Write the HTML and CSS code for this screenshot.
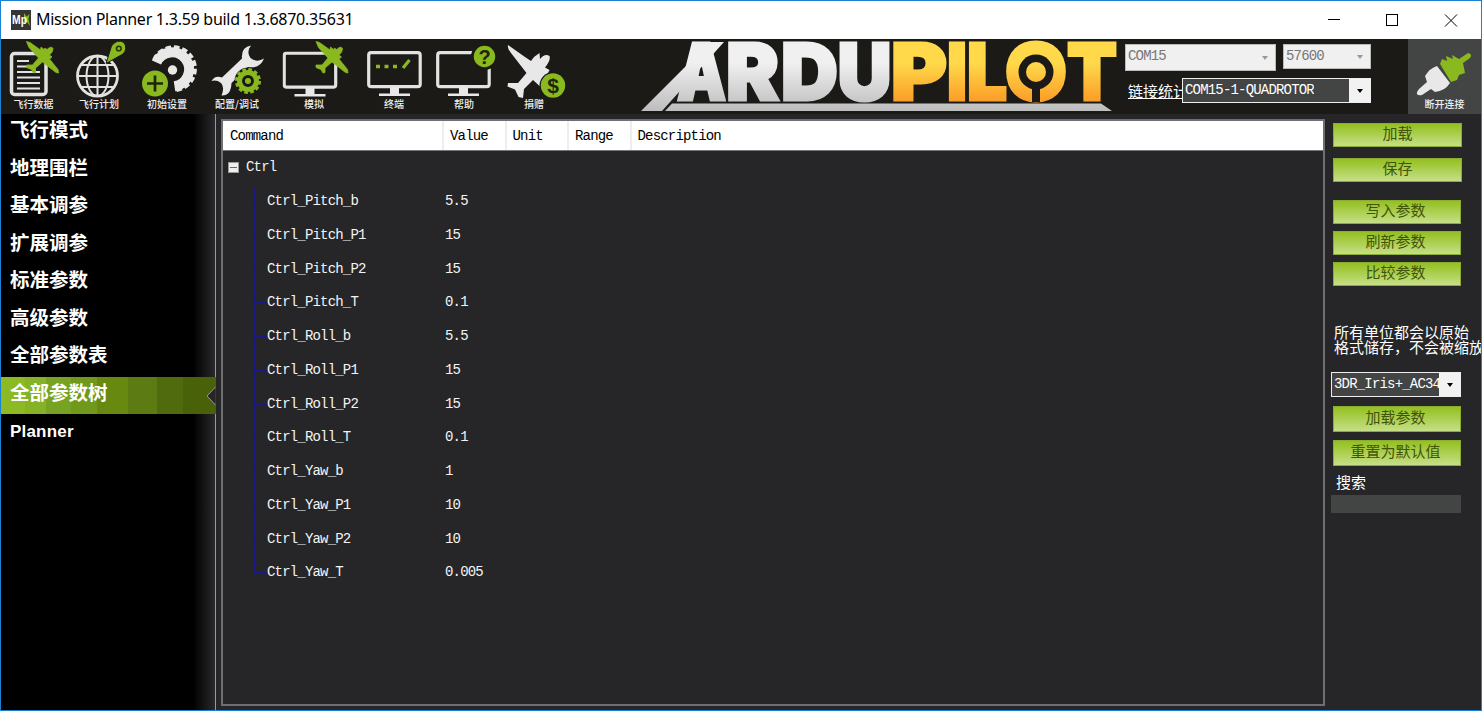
FILE: index.html
```html
<!DOCTYPE html>
<html lang="zh-CN">
<head>
<meta charset="utf-8">
<title>Mission Planner 1.3.59 build 1.3.6870.35631</title>
<link rel="stylesheet" href="styles.css">
</head>
<body>
<div class="window">
  <header class="titlebar">
    <svg class="app-icon" width="20" height="20" viewBox="0 0 20 20">
      <rect width="20" height="20" fill="#343434"/>
      <path d="M13 3 L15.500 6.500 L18.500 4 L17.500 9 L19 16 L16 12 L13 12 Z" fill="#83b520"/>
      <text class="app-mark" x="1" y="14" textLength="15" lengthAdjust="spacingAndGlyphs">Mp</text>
    </svg>
    <span class="title">Mission Planner 1.3.59 build 1.3.6870.35631</span>
    <svg class="controls" width="148" height="38" viewBox="1333 1 148 38" fill="none" stroke="#000" shape-rendering="crispEdges">
      <path d="M1328 19.500h12"/><rect x="1386.500" y="14.500" width="11" height="11"/>
      <path d="M1445 14.500l12 12M1457 14.500l-12 12" shape-rendering="auto"/>
    </svg>
  </header>

  <nav class="toolbar">
    <div class="tool w65"><svg width="65" height="58" viewBox="1 39 65 58">
      <rect x="11.500" y="53.500" width="34.500" height="41" rx="3" fill="none" stroke="#e2e2e2" stroke-width="3.500"/>
      <path d="M17 61h12M17 66.500h11M17 72h23M17 77.500h23M17 83h23M17 88.500h23" stroke="#e2e2e2" stroke-width="2"/>
      <use href="#plane" x="26" y="41.500"/>
    </svg><span>飞行数据</span></div>

    <div class="tool w66"><svg width="66" height="58" viewBox="66 39 66 58">
      <g fill="none" stroke="#e2e2e2" stroke-width="2">
        <circle cx="97.500" cy="76" r="20" stroke-width="2.800"/><ellipse cx="97.500" cy="76" rx="11" ry="20"/>
        <path d="M97.500 56v40M77.500 76h40M81 65h33M81 87h33"/>
      </g>
      <path d="M106 63.500L111.500 46Q117 38.500 124 42.500Q128 49 123 54Z" fill="#8ab81f" stroke="#1b1a17" stroke-width="1"/>
      <circle cx="118.800" cy="48.500" r="2.300" fill="none" stroke="#2b350c" stroke-width="1.600"/>
    </svg><span>飞行计划</span></div>

    <div class="tool w70"><svg width="70" height="58" viewBox="132 39 70 58">
      <g fill="none" stroke="#e8e8e8">
        <path d="M156.500 62.500A17 17 0 1 1 174.500 86.200" stroke-width="10"/>
        <path d="M154 60A21.400 21.400 0 1 1 176 90" stroke-width="4" stroke-dasharray="5.500 2.800"/>
      </g>
      <circle cx="172.500" cy="70" r="4.700" fill="#e8e8e8"/>
      <circle cx="155" cy="83.500" r="13" fill="#8ab81f"/>
      <path d="M155 75.500v16M147 83.500h16" stroke="#1d2608" stroke-width="2.700"/>
    </svg><span>初始设置</span></div>

    <div class="tool w70"><svg width="70" height="58" viewBox="202 39 70 58">
      <path d="M251 45.500Q241 47 242 58.500L222 77.500Q215 75 211.500 81Q216.500 79.500 221 83Q225 87 221.500 95.500Q231 96 231.500 83L248 67Q260 69 264 58.500Q257 63 250.500 58Q246 52 251 45.500Z" fill="#e8e8e8"/>
      <circle cx="248" cy="81" r="13.500" fill="#1b1a17"/>
      <circle cx="248" cy="81" r="8.500" fill="none" stroke="#8ab81f" stroke-width="5"/>
      <circle cx="248" cy="81" r="11.500" fill="none" stroke="#8ab81f" stroke-width="3" stroke-dasharray="3.600 2.420"/>
      <circle cx="248" cy="81" r="3" fill="#8ab81f"/>
    </svg><span>配置/调试</span></div>

    <div class="tool w84"><svg width="84" height="58" viewBox="272 39 84 58">
      <use href="#monitor" x="282.500" y="51.500"/>
      <use href="#plane" x="315.500" y="41.500"/>
    </svg><span>模拟</span></div>

    <div class="tool w76"><svg width="76" height="58" viewBox="356 39 76 58">
      <use href="#monitor" x="367" y="51"/>
      <path d="M376 66.500h4M384.500 66.500h4M393 66.500h4" stroke="#8ab81f" stroke-width="3.500"/>
      <path d="M403 68l6.500-8" stroke="#8ab81f" stroke-width="3.200"/>
    </svg><span>终端</span></div>

    <div class="tool w64"><svg width="64" height="58" viewBox="432 39 64 58">
      <use href="#monitor" x="436" y="51"/>
      <circle cx="484.500" cy="56.500" r="13.500" fill="#1b1a17"/>
      <circle cx="484.500" cy="56.500" r="10.700" fill="#8ab81f"/>
      <text class="badge-mark" x="484.500" y="63.500">?</text>
    </svg><span>帮助</span></div>

    <div class="tool w76"><svg width="76" height="58" viewBox="496 39 76 58">
      <path d="M508 45Q507 48 511 53L526.500 73L518 83L508 83L507.500 86.500L515 89.500L518.500 97L523 98L524 89L533 80L545 91L553 76L548 73L549.500 70L545 67.500Q551 60 549.500 56Q545 53 540 59L539.500 53L534 57L531 61L525 57Z" fill="#e8e8e8"/>
      <circle cx="553" cy="85.500" r="13.500" fill="#1b1a17"/>
      <circle cx="553" cy="85.500" r="12.200" fill="#8ab81f"/>
      <text class="badge-mark dollar" x="553" y="93">$</text>
    </svg><span>捐赠</span></div>

    <svg class="brand" width="480" height="74" viewBox="639 39 480 74">
      <defs>
        <linearGradient id="silver" gradientUnits="userSpaceOnUse" x1="0" y1="42" x2="0" y2="111"><stop offset=".3" stop-color="#f0f0f0"/><stop offset="1" stop-color="#bdbdbd"/></linearGradient>
        <linearGradient id="gold" gradientUnits="userSpaceOnUse" x1="0" y1="42" x2="0" y2="102"><stop offset=".35" stop-color="#ffd94a"/><stop offset="1" stop-color="#fb9c26"/></linearGradient>
      </defs>
      <path d="M641 111L710 42H724L662 111ZM665 111L672 103.500H1101L1112 111Z" fill="url(#silver)"/>
      <g class="brand-text" fill="url(#silver)" stroke="url(#silver)">
        <text x="677" y="100" textLength="49" lengthAdjust="spacingAndGlyphs">A</text>
        <text x="726" y="100" textLength="53" lengthAdjust="spacingAndGlyphs">R</text>
        <text x="781" y="100" textLength="57" lengthAdjust="spacingAndGlyphs">D</text>
        <text x="837.500" y="100" textLength="54" lengthAdjust="spacingAndGlyphs">U</text>
      </g>
      <g class="brand-text" fill="url(#gold)" stroke="url(#gold)">
        <text x="891" y="100" textLength="56" lengthAdjust="spacingAndGlyphs">P</text>
        <text x="947" y="100" textLength="20" lengthAdjust="spacingAndGlyphs">I</text>
        <text x="967" y="100" textLength="40" lengthAdjust="spacingAndGlyphs">L</text>
        <text x="1005" y="100" textLength="62" lengthAdjust="spacingAndGlyphs">O</text>
        <text x="1067" y="100" textLength="50" lengthAdjust="spacingAndGlyphs">T</text>
      </g>
      <path d="M1032 82h8v20h-8z" fill="#1b1a17"/>
      <circle cx="1036" cy="72" r="17.500" fill="#1b1a17"/>
      <circle cx="1036" cy="72" r="10" fill="url(#gold)"/>
    </svg>

    <div class="link">
      <div class="link-row">
        <div class="select off port">COM15<i></i></div>
        <div class="select off baud">57600<i></i></div>
      </div>
      <div class="link-row second">
        <a class="stats">链接统计</a>
        <div class="select dark vehicle"><b>COM15-1-QUADROTOR</b><i></i></div>
      </div>
    </div>

    <div class="tool connect"><svg width="72" height="58" viewBox="1409 39 72 58">
      <path d="M1419 89L1427 82L1425 76Q1430 68 1437 66L1450 83Q1445 91 1435 92L1431 89L1422 95Q1416 96 1417 92Z" fill="#e8e8e8"/>
      <path d="M1440 64L1442 59L1447 61L1446 56L1453 59L1452 55L1459 59L1468 53Q1473 54 1470 58L1463 63L1465 73L1459 75L1457 80L1451 82Z" fill="#8ab81f"/>
    </svg><span>断开连接</span></div>
  </nav>

  <main class="body">
    <aside class="sidebar">
      <a>飞行模式</a><a>地理围栏</a><a>基本调参</a><a>扩展调参</a><a>标准参数</a><a>高级参数</a><a>全部参数表</a>
      <a class="active">全部参数树<svg class="notch" width="10" height="18" viewBox="0 0 10 18"><path d="M9.500 0L1 9L9.500 18" fill="#262628" stroke="#999"/></svg></a>
      <a class="latin">Planner</a>
    </aside>

    <section class="tree">
      <div class="head"><span>Command</span><span>Value</span><span>Unit</span><span>Range</span><span>Description</span></div>
      <div class="row root"><span class="name"><i class="toggle"></i>Ctrl</span></div>
      <div class="children">
        <div class="row"><span class="name">Ctrl_Pitch_b</span><span>5.5</span></div>
        <div class="row"><span class="name">Ctrl_Pitch_P1</span><span>15</span></div>
        <div class="row"><span class="name">Ctrl_Pitch_P2</span><span>15</span></div>
        <div class="row"><span class="name">Ctrl_Pitch_T</span><span>0.1</span></div>
        <div class="row"><span class="name">Ctrl_Roll_b</span><span>5.5</span></div>
        <div class="row"><span class="name">Ctrl_Roll_P1</span><span>15</span></div>
        <div class="row"><span class="name">Ctrl_Roll_P2</span><span>15</span></div>
        <div class="row"><span class="name">Ctrl_Roll_T</span><span>0.1</span></div>
        <div class="row"><span class="name">Ctrl_Yaw_b</span><span>1</span></div>
        <div class="row"><span class="name">Ctrl_Yaw_P1</span><span>10</span></div>
        <div class="row"><span class="name">Ctrl_Yaw_P2</span><span>10</span></div>
        <div class="row"><span class="name">Ctrl_Yaw_T</span><span>0.005</span></div>
      </div>
    </section>

    <aside class="panel">
      <div class="group files"><button>加载</button><button>保存</button></div>
      <div class="group params"><button>写入参数</button><button>刷新参数</button><button>比较参数</button></div>
      <p class="note">所有单位都会以原始<br>格式储存，不会被缩放</p>
      <div class="select dark preset"><b>3DR_Iris+_AC34</b><i></i></div>
      <div class="group defaults"><button>加载参数</button><button>重置为默认值</button></div>
      <label class="search-label">搜索</label>
      <div class="search"></div>
    </aside>
  </main>
</div>

<svg class="symbols" width="0" height="0">
  <symbol id="plane" width="34" height="34" viewBox="0 0 34 34" overflow="visible">
    <path d="M.5 0L4 1L14.500 8.500L15 5.500L18 8L19 6.500L21 8Q25.500 4 27 7Q27 10.500 23.500 13.500L26 15.500L23.500 17.500L32 28L32.500 31.500L30 31L16.500 20.500L9.500 26.500L9.500 31L7.500 31.500L5.500 28L.5 26L.5 23.500L6.500 23.500L12.500 16.500L3 6Z" fill="#8ab81f" stroke="#8ab81f" stroke-width=".8"/>
  </symbol>
  <symbol id="monitor" width="56" height="46" viewBox="0 0 56 46">
    <rect x="1.700" y="1.700" width="51.500" height="34" rx="2.500" fill="none" stroke="#e2e2e2" stroke-width="3.200"/>
    <path d="M23 36h9v6.500h11v2.500H12v-2.500h11z" fill="#e8e8e8"/>
  </symbol>
</svg>
</body>
</html>
```
FILE: styles.css
```css
* { box-sizing: border-box; }
body { margin: 0; background: #262628; font-family: "Liberation Sans", "Noto Sans CJK SC", sans-serif; }
.symbols { position: absolute; }
.window { width: 1482px; height: 711px; border: 1px solid #1a80d4; overflow: hidden; display: flex; flex-direction: column; }

.titlebar { height: 38px; background: #fff; display: flex; align-items: center; padding-left: 10px; flex: none; }
.title { font: 16px/36px "Noto Sans", sans-serif; letter-spacing: -.27px; margin-left: 5px; padding-bottom: 2px; color: #000; flex: 1; }
.app-mark { font: bold 12px "Liberation Sans", sans-serif; fill: #fff; }
.controls { overflow: visible; }

.toolbar { height: 75px; background: #1b1a17; display: flex; flex: none; }
.tool { display: flex; flex-direction: column; align-items: center; color: #eee; font: 500 10px/13px "Noto Sans CJK SC", sans-serif; }
.tool svg { overflow: visible; flex: none; }
.w64 { width: 64px; }
.w65 { width: 65px; }
.w66 { width: 66px; }
.w70 { width: 70px; }
.w76 { width: 76px; }
.w84 { width: 84px; }
.badge-mark { font: bold 20px "Liberation Sans", sans-serif; fill: #1d2608; text-anchor: middle; }
.dollar { font-size: 21px; }
.brand { margin-left: 67px; flex: none; }
.brand-text { font: 900 78px Inter, sans-serif; stroke-width: 3px; }
.link { width: 251px; margin-left: 6px; padding-top: 5px; }
.link-row { display: flex; gap: 7px; align-items: flex-start; height: 34px; }
.link-row.second { gap: 0; padding-left: 3px; }
.select { display: flex; justify-content: space-between; font: 14px/20px "Liberation Mono", monospace; letter-spacing: -.82px; white-space: nowrap; }
.select i { width: 21px; flex: none; display: flex; justify-content: center; align-items: center; }
.select i::after { content: ""; border: 3.5px solid transparent; border-top: 4px solid #000; border-bottom: 0; }
.off { background: #f0f0f0; color: #777; border: 1px solid #bbb; padding-left: 2px; }
.off i::after { border-top-color: #999; }
.port { width: 151px; height: 27px; line-height: 22px; }
.baud { width: 88px; height: 25px; line-height: 22px; }
.dark { background: #434444; color: #fff; border: 1px solid #eee; }
.dark i { background: #f2f2f2; }
.dark b { font-weight: 400; overflow: hidden; padding-left: 2px; }
.vehicle { width: 189px; height: 25px; line-height: 22px; }
.stats { width: 54px; overflow: hidden; white-space: nowrap; color: #fff; text-decoration: underline; font: 15px/26px "Noto Sans CJK SC", sans-serif; }
.connect { width: 73px; margin-left: 32px; background: #434444; }

.body { flex: 1; display: flex; background: #262628; min-height: 0; }
.sidebar { width: 215px; background: linear-gradient(90deg, #000 192px, #29292b 214px); border-right: 1px solid #999; flex: none; }
.sidebar a { display: block; height: 37.5px; padding-left: 9px; color: #fff; font: 700 19.5px/29px "Noto Sans CJK SC", sans-serif; }
.sidebar .active { position: relative; height: 37px; background: linear-gradient(90deg, #8db922 0 24px, #86b225 24px 45px, #78a322 45px 70px, #70991b 70px 96px, #67890f 96px 127px, #5c7b12 127px 156px, #506b0d 156px 182px, #496108 182px); width: 215px; }
.notch { position: absolute; right: 0; top: 10px; }
.sidebar .latin { font: bold 17px/36px "Liberation Sans", sans-serif; letter-spacing: .2px; }

.tree { width: 1104px; height: 587px; margin: 5px 0 0 5px; border: 2px solid #6d7073; flex: none; font: 14px/33px "Liberation Mono", monospace; letter-spacing: -.82px; color: #f4f4f4; }
.head { display: flex; background: #fff; color: #000; height: 30px; line-height: 30px; border-bottom: 1px solid #777; }
.head span { width: 62.500px; border-left: 2px solid #eee; padding-left: 6px; }
.head span:first-child { width: 219px; border-left: 0; padding-left: 7px; }
.head span:last-child { width: auto; }
.row { display: flex; height: 33.750px; align-items: center; }
.row .name { width: 190px; display: flex; align-items: center; }
.root .name { padding-left: 5px; }
.root .name::after { content: ""; order: 1; width: 6px; margin-right: 1px; border-top: 1px solid #171785; }
.root .name { flex-direction: row; }
.toggle { width: 11px; height: 11px; flex: none; background: linear-gradient(#4c6aa0, #4c6aa0) center / 7px 1px no-repeat, #eee; border: 1px solid #999; }
.root .toggle { margin-right: 7px; }
.root .name::after { display: none; }
.toggle::after { content: ""; display: block; width: 6px; margin: 4px 0 0 10px; border-top: 1px solid #171785; }
.children { margin-left: 31px; background: linear-gradient(#171785, #171785) 0 2px / 1px 387px no-repeat; }
.children .name::before { content: ""; width: 12px; height: 0; border-top: 1px solid #171785; }
.children .row { padding-left: 1px; }

.panel { padding: 9px 0 0 6px; width: 156px; flex: none; }
.group { display: flex; flex-direction: column; margin-left: 2px; }
.group button { width: 128px; height: 24px; padding: 0 3px 5px 0; border: 1px solid #8aad32; background: linear-gradient(#93c01f, #c6df87); color: #405507; font: 15px/17px "Noto Sans CJK SC", sans-serif; }
.files { gap: 11px; }
.files button { width: 129px; padding-right: 0; }
.params { gap: 7px; margin-top: 18px; }
.note { margin: 38px 0 0 3px; color: #fff; white-space: nowrap; font: 15px/15px "Noto Sans CJK SC", sans-serif; }
.preset { width: 130px; height: 25px; margin-top: 18px; line-height: 22px; }
.defaults { gap: 8px; margin-top: 9px; }
.defaults button { height: 26px; }
.search-label { display: block; margin: 5px 0 0 5px; color: #fff; font: 15px/22px "Noto Sans CJK SC", sans-serif; }
.search { width: 130px; height: 18px; margin-top: 2px; background: #434444; }
```
